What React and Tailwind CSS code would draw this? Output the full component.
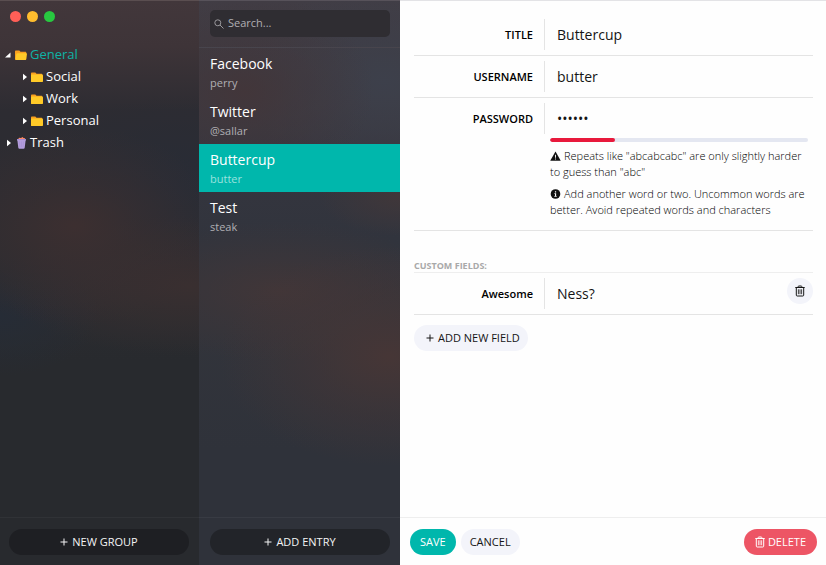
import { useState } from "react";

const folders = [
  { name: "Social" },
  { name: "Work" },
  { name: "Personal" },
];

const entries = [
  { title: "Facebook", user: "perry" },
  { title: "Twitter", user: "@sallar" },
  { title: "Buttercup", user: "butter" },
  { title: "Test", user: "steak" },
];

function Caret({ open }) {
  return (
    <svg viewBox="0 0 6 8" className="h-2 w-[6px] shrink-0 fill-white" aria-hidden="true">
      {open ? <path d="M5.500 1.500v5H0z" /> : <path d="M1 .8l4 3.200-4 3.200z" />}
    </svg>
  );
}

function Folder({ open }) {
  return (
    <svg viewBox="0 0 12 11" className="h-[11px] w-3 shrink-0" aria-hidden="true">
      <path d="M1 .5h3.300l1.200 1.300h4.800c.6 0 1 .4 1 .9V9c0 .5-.4 1-1 1H1c-.6 0-1-.5-1-1V1.500c0-.5.4-1 1-1z" fill="#f9a01f" />
      {open ? (
        <path d="M2.300 3.300h8.900c.5 0 .8.400.7.900l-.8 5c-.1.500-.5.800-1 .8H1.200c-.5 0-.8-.4-.7-.9l.8-5c.1-.5.500-.8 1-.8z" fill="#ffca28" />
      ) : (
        <path d="M.8 2.400h10.300c.5 0 .9.400.9.900V9c0 .6-.4 1-1 1H1c-.6 0-1-.4-1-1V3.200c0-.5.3-.8.8-.8z" fill="#ffca28" />
      )}
    </svg>
  );
}

function TrashCan() {
  return (
    <svg viewBox="0 0 11 12" className="h-3 w-[11px] shrink-0" aria-hidden="true">
      <path d="M2 2.500l1-1.700L5 1l1.500-.9 1 1L9 1.300l.4 1.400z" fill="#ff8a65" />
      <path d="M1 2h9v1.500h-.4l-.9 7.300c-.1.700-.5 1-1.100 1H3.400c-.6 0-1-.3-1.100-1l-.9-7.300H1z" fill="#b39ddb" />
      <path d="M1 2h9v.8H1z" fill="#9f86cf" />
      <path d="M3.500 4.500l.4 5.500M5.500 4.500V10M7.500 4.500L7.100 10" stroke="#9f86cf" strokeWidth=".4" />
    </svg>
  );
}

function Plus() {
  return (
    <svg viewBox="0 0 8 8" className="h-2 w-2 shrink-0" stroke="currentColor" strokeWidth="1" aria-hidden="true">
      <path d="M4 .5v7M.5 4h7" />
    </svg>
  );
}

function Bin() {
  return (
    <svg viewBox="0 0 10 12" className="h-3 w-[10px] shrink-0" fill="none" stroke="currentColor" aria-hidden="true">
      <path d="M.3 2.500h9.400M3.200 2.500V1.600q0-.6.600-.6h2.400q.6 0 .6.600v.9M1.300 2.500v7.600q0 .9.900.9h5.600q.9 0 .9-.9V2.500" />
      <path d="M3.400 4.300v4.900M5 4.300v4.900M6.600 4.300v4.900" strokeWidth=".8" />
    </svg>
  );
}

function Field({ id, label, children, value, type = "text" }) {
  return (
    <div className="flex items-center">
      <label htmlFor={id} className="w-[130px] shrink-0 pt-px pr-[11px] text-right text-[11px] font-semibold text-black">
        {label}
      </label>
      <input
        id={id}
        type={type}
        defaultValue={value}
        className="h-[31px] min-w-0 flex-1 border-l border-[#e4e4e4] bg-transparent pl-3 text-sm outline-none"
      />
      {children}
    </div>
  );
}

const row = "border-b border-[#e4e4e4] py-[5px]";

const darkButton =
  "flex h-[26px] w-full items-center justify-center gap-1 rounded-full text-[11px] font-medium text-[#f4f4f5]";

export default function App() {
  const [selected, setSelected] = useState("Buttercup");

  return (
    <div className="flex h-screen font-['Open_Sans',sans-serif] text-[#151515]">
      <aside className="flex w-[199px] shrink-0 flex-col border-t border-[#5a4e50] bg-[#282a2e] bg-[radial-gradient(ellipse_150px_100px_at_75px_225px,#3c2f30_0%,#3c2f3080_45%,#3c2f3000_100%),radial-gradient(ellipse_190px_70px_at_190px_285px,#392f30_0%,#392f3080_50%,#392f3000_100%),radial-gradient(ellipse_100px_60px_at_0px_315px,#262c36_0%,#262c3600_100%),radial-gradient(ellipse_160px_90px_at_180px_185px,#282c36_0%,#282c3600_100%),linear-gradient(#42373b_0px,#3e3438_45px,#2d2c32_110px,#2b2c32_200px,#2b2c30_300px,#282a2e_360px)] bg-no-repeat">
        <div className="flex gap-[6px] px-[10px] pt-[10px]">
          <span className="size-[11px] rounded-full bg-[#ff5f57]" />
          <span className="size-[11px] rounded-full bg-[#ffbd2e]" />
          <span className="size-[11px] rounded-full bg-[#28c940]" />
        </div>
        <nav className="mt-[22px] flex-1 text-[13px] font-medium text-white">
          <ul>
            <li>
              <button className="flex h-[22px] w-full items-center gap-1 pl-[5px] text-left font-normal text-[#0fb3a6]">
                <Caret open />
                <span className="flex items-center gap-[3px]">
                  <Folder open />
                  General
                </span>
              </button>
              <ul>
                {folders.map((f) => (
                  <li key={f.name}>
                    <button className="flex h-[22px] w-full items-center gap-[3px] pl-[22px]">
                      <Caret />
                      <span className="flex items-center gap-[3px]">
                        <Folder />
                        {f.name}
                      </span>
                    </button>
                  </li>
                ))}
              </ul>
            </li>
            <li>
              <button className="flex h-[22px] w-full items-center gap-1 pl-[6px]">
                <Caret />
                <span className="flex items-center gap-[3px]">
                  <TrashCan />
                  Trash
                </span>
              </button>
            </li>
          </ul>
        </nav>
        <footer className="border-t border-[#303236] pt-[11px] pr-[10px] pb-[10px] pl-[9px]">
          <button className={`${darkButton} bg-[#1e1f23]`}>
            <Plus />
            NEW GROUP
          </button>
        </footer>
      </aside>

      <section className="flex w-[201px] shrink-0 flex-col border-t border-[#57525a] bg-[#2f323a] bg-[radial-gradient(ellipse_130px_100px_at_45px_90px,#42363a_0%,#42363a80_40%,#42363a00_100%),radial-gradient(ellipse_140px_100px_at_185px_80px,#3d404b_0%,#3d404b80_45%,#3d404b00_100%),radial-gradient(ellipse_170px_110px_at_190px_355px,#463636_0%,#46363680_45%,#46363600_100%),radial-gradient(ellipse_170px_70px_at_80px_290px,#413638_0%,#41363880_45%,#41363800_100%),radial-gradient(ellipse_80px_40px_at_200px_195px,#40373a_0%,#40373a00_100%),linear-gradient(#413d45_0px,#3c3a42_100px,#34353e_180px,#31343d_240px,#32343b_330px,#2f323a_450px)] bg-no-repeat">
        <div className="border-b border-[#48454d] pt-[9px] pr-[10px] pb-[10px] pl-[11px]">
          <label className="flex h-[27px] items-center gap-1 rounded-[5px] bg-[#2f2d32] px-1 text-[#9a999d]">
            <svg viewBox="0 0 10 10" className="size-[10px] shrink-0" fill="none" stroke="currentColor" strokeWidth="1" aria-hidden="true">
              <circle cx="3.800" cy="3.800" r="3" />
              <path d="M6 6l3.500 3.500" />
            </svg>
            <input
              type="search"
              aria-label="Search"
              placeholder="Search..."
              className="w-full min-w-0 bg-transparent text-[11px] text-white outline-none placeholder:text-[#b0afb3]"
            />
          </label>
        </div>
        <ul className="flex-1">
          {entries.map((e) => (
            <li key={e.title}>
              <button
                onClick={() => setSelected(e.title)}
                className={`flex h-12 w-full flex-col justify-center gap-px pr-[10px] pl-[11px] text-left ${
                  selected === e.title ? "bg-[#00b7ac]" : ""
                }`}
              >
                <span className="text-sm leading-5 font-medium text-white">{e.title}</span>
                <span className={`text-[11px] leading-4 ${selected === e.title ? "text-[#99e2de]" : "text-[#b0afb3]"}`}>
                  {e.user}
                </span>
              </button>
            </li>
          ))}
        </ul>
        <footer className="border-t border-[#383b43] pt-[11px] pr-[10px] pb-[10px] pl-[11px]">
          <button className={`${darkButton} bg-[#222429]`}>
            <Plus />
            ADD ENTRY
          </button>
        </footer>
      </section>

      <main className="flex min-w-0 flex-1 flex-col border-t border-[#e3e3e6] bg-[#fefefe]">
        <form className="flex-1 pt-[13px] pr-[13px] pl-[14px]" onSubmit={(e) => e.preventDefault()}>
          <div className={row}>
            <Field id="title" label="TITLE" value="Buttercup" />
          </div>
          <div className={row}>
            <Field id="username" label="USERNAME" value="butter" />
          </div>
          <div className="border-b border-[#e4e4e4] pt-[5px] pb-3">
            <Field id="password" label="PASSWORD" value="butter" type="password" />
            <div className="mt-1 mr-[5px] ml-[136px]">
              <div className="h-1 overflow-hidden rounded-full bg-[#e4e7f1]">
                <div className="h-full w-1/4 rounded-full bg-[#e8193c]" />
              </div>
              <p className="mt-[6px] text-[11px] leading-4 font-light text-black">
                <svg viewBox="0 0 12 11" className="mr-[3px] inline h-[10px] w-[11px] align-[-1px]" aria-hidden="true">
                  <path d="M6 .5l5.800 10.300H.2z" fill="#111" />
                  <path d="M5.500 4h1v3.500h-1zM5.500 8.300h1v1.100h-1z" fill="#fff" />
                </svg>
                Repeats like "abcabcabc" are only slightly harder to guess than "abc"
              </p>
              <p className="mt-[6px] text-[11px] leading-4 font-light text-black">
                <svg viewBox="0 0 11 11" className="mr-[3px] inline h-[10px] w-[11px] align-[-1px]" aria-hidden="true">
                  <circle cx="5.500" cy="5.500" r="5.300" fill="#111" />
                  <path d="M4.900 2.500h1.300v1.300H4.900zM4.300 4.800h1.900v3h.6v.8H4.200v-.8h.7V5.600h-.6z" fill="#fff" />
                </svg>
                Add another word or two. Uncommon words are better. Avoid repeated words and characters
              </p>
            </div>
          </div>

          <h2 className="mt-[29px] border-b border-[#eeeeee] text-[9px] leading-3 font-bold text-[#a9a9a9]">
            CUSTOM FIELDS:
          </h2>
          <div className={row}>
            <Field id="awesome" label="Awesome" value="Ness?">
              <button
                type="button"
                aria-label="Remove field"
                className="flex size-[26px] items-center justify-center self-start rounded-full bg-[#f3f4fa]"
              >
                <Bin />
              </button>
            </Field>
          </div>
          <button
            type="button"
            className="mt-[10px] flex h-[26px] items-center gap-1 rounded-full bg-[#f3f4fa] pr-2 pl-3 text-[11px]"
          >
            <Plus />
            ADD NEW FIELD
          </button>
        </form>
        <footer className="flex items-center gap-[5px] border-t border-[#eeeeee] pt-[11px] pr-[9px] pb-[10px] pl-[10px] text-[11px]">
          <button className="h-[26px] rounded-full bg-[#00b7ac] px-[10px] font-medium text-white">SAVE</button>
          <button className="h-[26px] rounded-full bg-[#f3f4fa] px-[9px]">CANCEL</button>
          <button className="ml-auto flex h-[26px] items-center gap-[3px] rounded-full bg-[#ed5565] px-[11px] font-medium text-white">
            <Bin />
            DELETE
          </button>
        </footer>
      </main>
    </div>
  );
}
